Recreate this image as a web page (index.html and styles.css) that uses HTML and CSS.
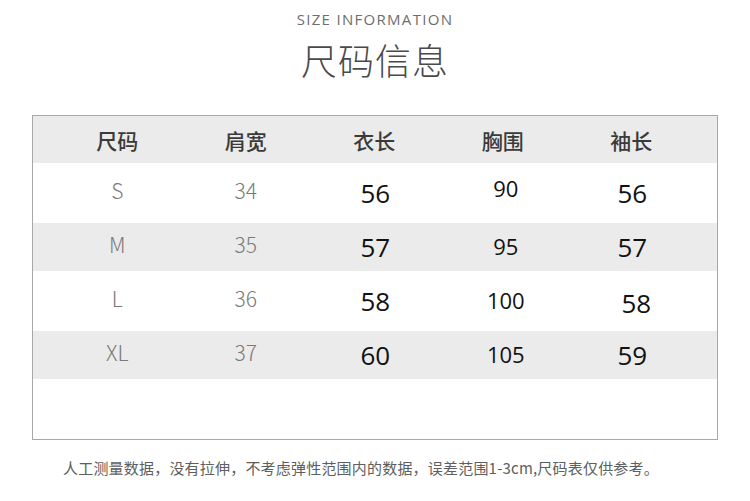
FILE: index.html
```html
<!DOCTYPE html>
<html lang="zh">
<head>
<meta charset="utf-8">
<title>尺码信息</title>
<link rel="stylesheet" href="styles.css">
</head>
<body>
<div class="page">
  <header class="heading">
    <div class="heading-en">SIZE INFORMATION</div>
    <h1 class="heading-cn">尺码信息</h1>
  </header>

  <div class="chart">
    <div class="row row-head">
      <div class="cell">尺码</div>
      <div class="cell">肩宽</div>
      <div class="cell">衣长</div>
      <div class="cell">胸围</div>
      <div class="cell">袖长</div>
    </div>
    <div class="row row-tall">
      <div class="cell light">S</div>
      <div class="cell light">34</div>
      <div class="cell big">56</div>
      <div class="cell mid up">90</div>
      <div class="cell big">56</div>
    </div>
    <div class="row row-short shade">
      <div class="cell light">M</div>
      <div class="cell light">35</div>
      <div class="cell big">57</div>
      <div class="cell mid">95</div>
      <div class="cell big">57</div>
    </div>
    <div class="row row-tall">
      <div class="cell light">L</div>
      <div class="cell light">36</div>
      <div class="cell big">58</div>
      <div class="cell mid">100</div>
      <div class="cell big shift">58</div>
    </div>
    <div class="row row-short shade">
      <div class="cell light">XL</div>
      <div class="cell light">37</div>
      <div class="cell big">60</div>
      <div class="cell mid">105</div>
      <div class="cell big">59</div>
    </div>
    <div class="row row-tall"></div>
  </div>

  <p class="note">人工测量数据，没有拉伸，不考虑弹性范围内的数据，误差范围1-3cm,尺码表仅供参考。</p>
</div>
</body>
</html>
```

FILE: styles.css
```css
* { box-sizing: border-box; }

html, body {
  margin: 0;
  padding: 0;
  background: #ffffff;
}

.page {
  width: 750px;
  height: 501px;
  display: flex;
  flex-direction: column;
  align-items: center;
  font-family: "Noto Sans CJK SC", "Noto Sans", sans-serif;
}

.heading {
  display: flex;
  flex-direction: column;
  align-items: center;
  padding-top: 9px;
}

.heading-en {
  font-family: "Open Sans", "Noto Sans", sans-serif;
  font-size: 15px;
  line-height: 20px;
  letter-spacing: 1.3px;
  color: #6e6e6e;
}

.heading-cn {
  margin: 6px 0 0;
  font-size: 36px;
  line-height: 48px;
  font-weight: 300;
  letter-spacing: 1px;
  color: #4a4a4a;
}

.chart {
  margin-top: 32px;
  width: 686px;
  border: 1.5px solid #a8a8a8;
  display: flex;
  flex-direction: column;
}

.row {
  display: grid;
  grid-template-columns: repeat(5, 128.5px);
  padding: 0 20px;
  align-items: center;
}

.row-head {
  height: 47px;
  background: #ebebeb;
}

.row-tall { height: 60px; }
.row-short { height: 48px; }
.shade { background: #ebebeb; }

.cell {
  text-align: center;
}

.row-head .cell {
  font-size: 21px;
  font-weight: 500;
  color: #3a3a3a;
  line-height: 28px;
}

.light {
  font-size: 21px;
  font-weight: 300;
  color: #7a7a7a;
  line-height: 28px;
  padding-bottom: 6px;
}

.big {
  font-family: "Open Sans", "Noto Sans", sans-serif;
  font-size: 26px;
  color: #111111;
  line-height: 32px;
  padding-left: 2px;
}

.mid {
  font-family: "Open Sans", "Noto Sans", sans-serif;
  font-size: 22px;
  color: #111111;
  line-height: 28px;
  padding-left: 6px;
  padding-bottom: 2px;
}

.up { padding-bottom: 10px; }
.shift { padding-left: 10px; padding-top: 4px; }

.note {
  margin: 18px 0 0;
  font-size: 15px;
  line-height: 20px;
  letter-spacing: 0.2px;
  color: #5e5e5e;
  font-weight: 400;
  padding-right: 28px;
}
```
